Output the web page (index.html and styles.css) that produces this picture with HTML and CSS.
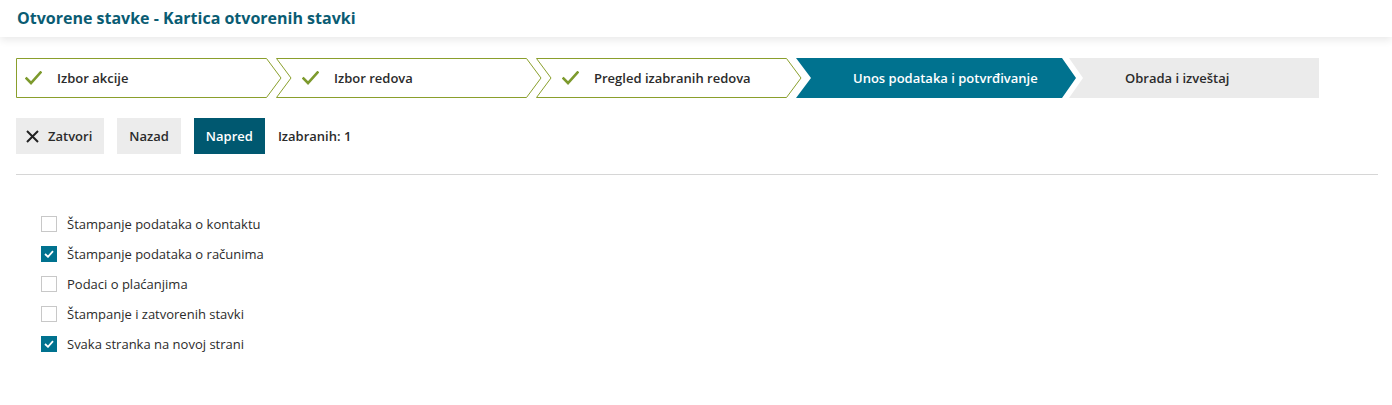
FILE: index.html
```html
<!DOCTYPE html>
<html lang="sr">
<head>
<meta charset="utf-8">
<title>Otvorene stavke - Kartica otvorenih stavki</title>
<link rel="stylesheet" href="styles.css">
</head>
<body>
<header class="topbar">
  <h1 class="title">Otvorene stavke - Kartica otvorenih stavki</h1>
</header>
<main class="content">
  <nav class="steps">
    <div class="step step-first">
      <svg class="step-bg" width="266" height="40" viewBox="0 0 266 40"><polygon points="0.5,0.5 250.5,0.5 265,20 250.5,39.5 0.5,39.5" fill="#fff" stroke="#8a9f2c" stroke-width="1"/></svg>
      <div class="step-label"><svg class="check" width="17" height="14" viewBox="0 0 17 14"><path d="M1.5 7.5 L6 12 L15.5 1.5" fill="none" stroke="#7d9a2d" stroke-width="2.6" stroke-linecap="square"/></svg><span>Izbor akcije</span></div>
    </div>
    <div class="step step-done">
      <svg class="step-bg" width="266" height="40" viewBox="0 0 266 40"><polygon points="0.5,0.5 250.5,0.5 265,20 250.5,39.5 0.5,39.5 15,20" fill="#fff" stroke="#8a9f2c" stroke-width="1"/></svg>
      <div class="step-label"><svg class="check" width="17" height="14" viewBox="0 0 17 14"><path d="M1.5 7.5 L6 12 L15.5 1.5" fill="none" stroke="#7d9a2d" stroke-width="2.6" stroke-linecap="square"/></svg><span>Izbor redova</span></div>
    </div>
    <div class="step step-done">
      <svg class="step-bg" width="266" height="40" viewBox="0 0 266 40"><polygon points="0.5,0.5 250.5,0.5 265,20 250.5,39.5 0.5,39.5 15,20" fill="#fff" stroke="#8a9f2c" stroke-width="1"/></svg>
      <div class="step-label"><svg class="check" width="17" height="14" viewBox="0 0 17 14"><path d="M1.5 7.5 L6 12 L15.5 1.5" fill="none" stroke="#7d9a2d" stroke-width="2.6" stroke-linecap="square"/></svg><span>Pregled izabranih redova</span></div>
    </div>
    <div class="step step-active">
      <svg class="step-bg" width="280" height="40" viewBox="0 0 280 40"><polygon points="0,0 266,0 280,20 266,40 0,40 15,20" fill="#00728f"/></svg>
      <div class="step-label"><span>Unos podataka i potvrđivanje</span></div>
    </div>
    <div class="step step-todo">
      <svg class="step-bg" width="250" height="40" viewBox="0 0 250 40"><polygon points="0,0 250,0 250,40 0,40 14,20" fill="#ebebeb"/></svg>
      <div class="step-label"><span>Obrada i izveštaj</span></div>
    </div>
  </nav>

  <div class="toolbar">
    <button class="btn btn-light btn-close"><svg class="x-icon" width="13" height="13" viewBox="0 0 13 13"><path d="M1 1 L12 12 M12 1 L1 12" stroke="#222" stroke-width="2" fill="none"/></svg><span>Zatvori</span></button>
    <button class="btn btn-light btn-back">Nazad</button>
    <button class="btn btn-primary">Napred</button>
    <span class="selected-count">Izabranih: 1</span>
  </div>

  <div class="divider"></div>

  <ul class="options">
    <li class="option"><span class="box"></span><span class="option-text">Štampanje podataka o kontaktu</span></li>
    <li class="option"><span class="box box-checked"><svg width="10" height="8" viewBox="0 0 10 8"><path d="M1 4 L4 6.8 L9 1.2" fill="none" stroke="#fff" stroke-width="1.8"/></svg></span><span class="option-text">Štampanje podataka o računima</span></li>
    <li class="option"><span class="box"></span><span class="option-text">Podaci o plaćanjima</span></li>
    <li class="option"><span class="box"></span><span class="option-text">Štampanje i zatvorenih stavki</span></li>
    <li class="option"><span class="box box-checked"><svg width="10" height="8" viewBox="0 0 10 8"><path d="M1 4 L4 6.8 L9 1.2" fill="none" stroke="#fff" stroke-width="1.8"/></svg></span><span class="option-text">Svaka stranka na novoj strani</span></li>
  </ul>
</main>
</body>
</html>
```

FILE: styles.css
```css
* { box-sizing: border-box; }

html, body {
  margin: 0;
  padding: 0;
  background: #fff;
  font-family: "Open Sans", "Noto Sans", sans-serif;
  color: #2b2b2b;
}

.topbar {
  height: 37px;
  background: #fff;
  box-shadow: 0 3px 8px rgba(0, 0, 0, 0.09);
  position: relative;
  z-index: 1;
}

.title {
  margin: 0;
  padding-left: 17px;
  font-size: 16px;
  line-height: 37px;
  font-weight: 700;
  color: #0a5c73;
}

.content {
  padding: 0 14px 0 16px;
}

.steps {
  display: flex;
  margin-top: 21px;
  height: 40px;
}

.step {
  display: grid;
  height: 40px;
}

.step > * {
  grid-area: 1 / 1;
}

.step-bg {
  display: block;
}

.step + .step {
  margin-left: -6px;
}

.step-todo {
  margin-left: -7px !important;
}

.step-label {
  display: flex;
  align-items: center;
  font-size: 13px;
  font-weight: 600;
  color: #2b2b2b;
  padding-left: 26px;
  white-space: nowrap;
}

.step-first .step-label {
  padding-left: 9px;
}

.check {
  display: block;
  margin-right: 15px;
  flex: none;
}

.step-active .step-label {
  padding-left: 57px;
  color: #fff;
}

.step-todo .step-label {
  padding-left: 56px;
}

.toolbar {
  display: flex;
  align-items: center;
  gap: 13px;
  margin-top: 20px;
  height: 36px;
}

.btn {
  height: 36px;
  border: none;
  margin: 0;
  font-family: inherit;
  font-size: 13px;
  font-weight: 600;
  display: inline-flex;
  align-items: center;
  cursor: pointer;
}

.btn-light {
  background: #ececec;
  color: #2b2b2b;
}

.btn-close {
  padding: 0 12px 0 10px;
}

.x-icon {
  display: block;
  margin-right: 9px;
}

.btn-back {
  padding: 0 12px;
}

.btn-primary {
  background: #005870;
  color: #fff;
  padding: 0 12px;
}

.selected-count {
  font-size: 13px;
  font-weight: 600;
  color: #2b2b2b;
}

.divider {
  margin-top: 20px;
  height: 1px;
  background: #d6d6d6;
}

.options {
  list-style: none;
  margin: 34px 0 0;
  padding: 0 0 0 25px;
}

.option {
  display: flex;
  align-items: center;
  height: 30px;
}

.box {
  width: 16px;
  height: 16px;
  border: 1px solid #c8c8c8;
  background: #fff;
  margin-right: 10px;
  display: flex;
  align-items: center;
  justify-content: center;
  flex: none;
}

.box-checked {
  background: #00728f;
  border-color: #00728f;
}

.box svg { display: block; }

.option-text {
  font-size: 13px;
  color: #2b2b2b;
}
```
